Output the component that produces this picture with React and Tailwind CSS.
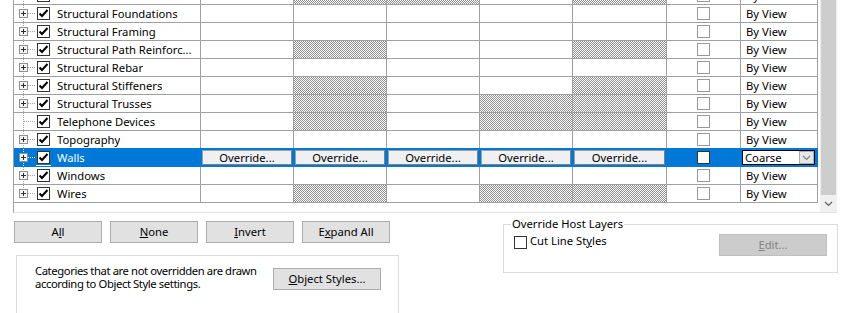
import React from 'react';

const HATCH = 'bg-[repeating-conic-gradient(#8e8e8e_0_25%,#ffffff_0_50%)] bg-[length:2px_2px]';
const OVR_WIDTHS = ['w-[93px]', 'w-[93px]', 'w-[93px]', 'w-[93px]', 'w-[94px]'];

const rows = [
  { name: 'Structural Fabric Reinforcement', hatch: [1, 2, 4] },
  { name: 'Structural Foundations', hatch: [] },
  { name: 'Structural Framing', hatch: [] },
  { name: 'Structural Path Reinforc...', hatch: [1, 4] },
  { name: 'Structural Rebar', hatch: [] },
  { name: 'Structural Stiffeners', hatch: [1, 4] },
  { name: 'Structural Trusses', hatch: [1, 3, 4] },
  { name: 'Telephone Devices', hatch: [1, 3, 4], leaf: true },
  { name: 'Topography', hatch: [] },
  { name: 'Walls', hatch: [], selected: true },
  { name: 'Windows', hatch: [] },
  { name: 'Wires', hatch: [1, 3, 4], last: true },
];

const TreeGlyph = ({ leaf, last, sel }) => {
  const dot = sel ? '#ffffff' : '#a0a0a0';
  return (
    <svg width="22" height="17" viewBox="0 0 22 17" className="block shrink-0">
      <line x1="9.5" y1="0" x2="9.5" y2={last ? 8 : 17} stroke={dot} strokeDasharray="1 1" />
      <line x1={leaf ? 10 : 14} y1="8.5" x2="22" y2="8.5" stroke={dot} strokeDasharray="1 1" />
      {!leaf && (
        <g>
          <rect x="5.5" y="4.5" width="8" height="8" fill="#f4f4f4" stroke="#8f8f8f" />
          <line x1="7" y1="8.5" x2="12" y2="8.5" stroke="#2b2b2b" />
          <line x1="9.5" y1="6" x2="9.5" y2="11" stroke="#2b2b2b" />
        </g>
      )}
    </svg>
  );
};

const CheckBox = ({ checked, dark }) => (
  <div
    className={`flex h-[13px] w-[13px] shrink-0 items-center justify-center border bg-white ${
      dark ? 'border-[#333333]' : 'border-[#999999]'
    }`}
  >
    {checked && (
      <svg width="11" height="11" viewBox="0 0 11 11" className="block">
        <path d="M1.5 5.5l2.5 2.5L9.5 2" fill="none" stroke="#000" strokeWidth="2" />
      </svg>
    )}
  </div>
);

const Chevron = ({ color = '#606060' }) => (
  <svg width="9" height="6" viewBox="0 0 9 6" className="block">
    <path d="M1 1l3.5 3.5L8 1" fill="none" stroke={color} strokeWidth="1.2" />
  </svg>
);

const Row = ({ row, nextSelected }) => {
  const sel = row.selected;
  const line = sel ? 'border-[#0078d7]' : 'border-[#a0a0a0]';
  const bottom = sel || nextSelected ? 'border-b-[#0078d7]' : 'border-b-[#a0a0a0]';
  return (
    <div className={`flex h-[18px] border-b ${bottom} ${sel ? 'bg-[#0078d7]' : 'bg-white'}`}>
      <div className={`flex w-[187px] shrink-0 items-center border-r ${line}`}>
        <TreeGlyph leaf={row.leaf} last={row.last} sel={sel} />
        <div className={`flex h-[17px] w-[15px] shrink-0 items-center justify-center ${sel ? 'border-b border-white' : ''}`}>
          <CheckBox checked dark />
        </div>
        <span className={`ml-[6px] truncate leading-[17px] ${sel ? 'text-white' : 'text-black'}`}>
          {row.name}
        </span>
      </div>
      {OVR_WIDTHS.map((w, i) => (
        <div
          key={i}
          className={`${w} shrink-0 border-r ${line} ${row.hatch.includes(i) ? HATCH : ''} ${sel ? 'p-px' : ''}`}
        >
          {sel && (
            <button className="flex h-full w-full items-center justify-center border border-[#a0a0a0] border-r-[#7f7f7f] border-b-[#7f7f7f] bg-[#f0f0f0] leading-none text-black">
              Override...
            </button>
          )}
        </div>
      ))}
      <div className={`flex w-[74px] shrink-0 items-center justify-center border-r ${line}`}>
        <CheckBox dark={sel} />
      </div>
      <div className={`w-[77px] shrink-0 border-r ${line} ${sel ? 'p-px pr-[2px]' : 'pl-[5px]'}`}>
        {sel ? (
          <div className="flex h-full items-center border border-black bg-white">
            <span className="flex-1 pl-[2px] leading-none">Coarse</span>
            <div className="flex h-full w-[15px] items-center justify-center border border-[#adadad] bg-[#e6e6e6]">
              <Chevron color="#808080" />
            </div>
          </div>
        ) : (
          <span className="leading-[17px]">By View</span>
        )}
      </div>
    </div>
  );
};

const Btn = ({ children, className = '' }) => (
  <button
    className={`flex h-[22px] shrink-0 items-center justify-center border border-[#adadad] bg-[#e1e1e1] leading-none text-black ${className}`}
  >
    {children}
  </button>
);

export default function App() {
  return (
    <div className="h-[313px] w-[844px] overflow-hidden bg-white text-[11.25px] text-black font-['Noto_Sans',sans-serif]">
      {/* category grid */}
      <div className="ml-[13px] flex h-[213px] w-[824px] border-l border-b border-l-[#a0a0a0] border-b-[#e3e3e3]">
        <div className="h-[212px] w-[804px] shrink-0 overflow-hidden">
          <div className="-mt-[13px]">
            {rows.map((r, i) => (
              <Row key={r.name} row={r} nextSelected={rows[i + 1]?.selected} />
            ))}
          </div>
        </div>
        <div className="ml-[2px] flex h-[212px] w-[17px] flex-col bg-[#f0f0f0]">
          <div className="mx-px h-[195px] bg-[#cdcdcd]" />
          <div className="flex flex-1 items-center justify-center">
            <Chevron />
          </div>
        </div>
      </div>

      {/* bottom controls */}
      <div className="flex items-start">
        <div className="ml-[14px] w-[386px] shrink-0 pt-[8px]">
          <div className="flex gap-[8px]">
            <Btn className="w-[88px]">
              A<span className="underline">l</span>l
            </Btn>
            <Btn className="w-[88px]">
              <span className="underline">N</span>one
            </Btn>
            <Btn className="w-[88px]">
              <span className="underline">I</span>nvert
            </Btn>
            <Btn className="w-[88px]">
              E<span className="underline">x</span>pand All
            </Btn>
          </div>
          <div className="ml-[2px] mt-[12px] flex h-[80px] w-[383px] items-start justify-between border border-[#dcdcdc] pl-[18px] pr-[17px]">
            <p className="whitespace-nowrap pt-[8px] leading-[13px] tracking-[-0.4px]">
              Categories that are not overridden are drawn
              <br />
              according to Object Style settings.
            </p>
            <Btn className="mt-[12px] w-[108px]">
              <span className="underline">O</span>bject Styles...
            </Btn>
          </div>
        </div>

        <fieldset className="ml-[103px] mt-[3px] h-[57px] w-[335px] shrink-0 border border-[#dcdcdc] pl-[7px] pr-[10px]">
          <legend className="px-[1px] leading-[16px]">Override Host Layers</legend>
          <div className="flex items-start justify-between">
            <label className="ml-[3px] mt-[4px] flex items-center">
              <CheckBox dark />
              <span className="ml-[3px] -mt-[3px] leading-[14px]">
                Cut Line St<span className="underline">y</span>les
              </span>
            </label>
            <button className="mt-[2px] flex h-[22px] w-[108px] items-center justify-center border border-[#bfbfbf] bg-[#cccccc] leading-none text-[#838383]">
              <span className="underline">E</span>dit...
            </button>
          </div>
        </fieldset>
      </div>
    </div>
  );
}
